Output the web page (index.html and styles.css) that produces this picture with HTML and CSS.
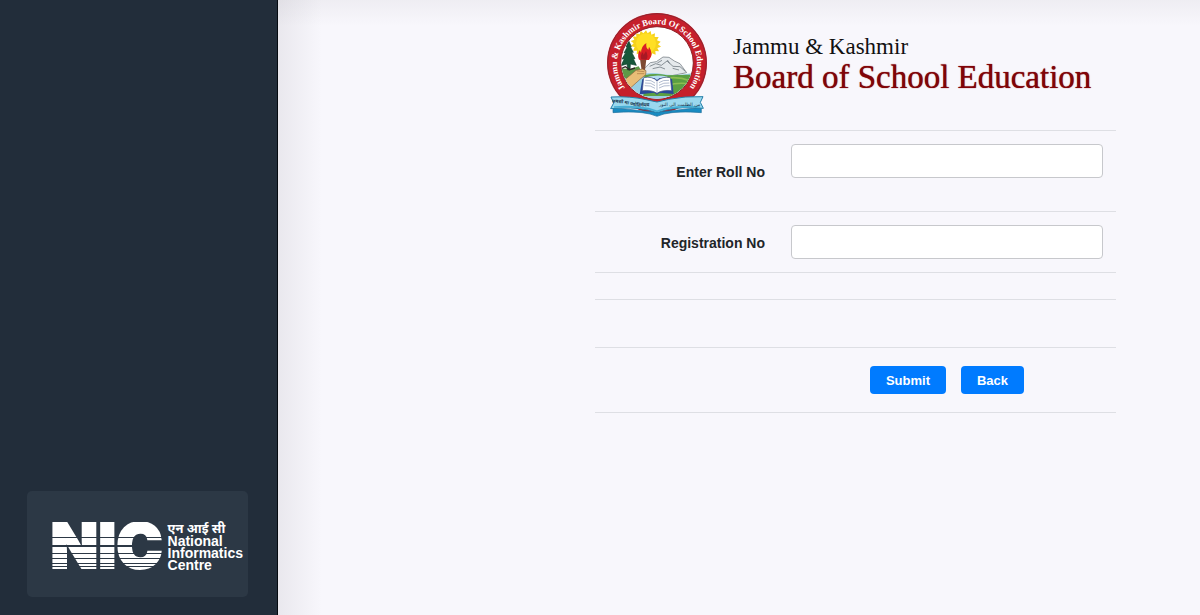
FILE: index.html
```html
<!DOCTYPE html>
<html lang="en">
<head>
    <meta charset="UTF-8">
    <meta name="viewport" content="width=device-width, initial-scale=1">
    <title>Jammu &amp; Kashmir Board of School Education</title>
    <link rel="stylesheet" href="styles.css">
</head>
<body>
    <aside class="sidebar">
        <div class="nic-card">
            <span class="nic-mark">NIC</span>
            <div class="nic-name">
                <span class="nic-hindi" lang="hi">एन आई सी</span>
                <span>National<br>Informatics<br>Centre</span>
            </div>
        </div>
    </aside>

    <main class="content">
        <form class="result-form">
            <header class="board-header">
                <svg class="seal" viewBox="30 18 312 324" aria-hidden="true">
                    <defs>
                        <clipPath id="scene"><circle cx="186" cy="174" r="107"/></clipPath>
                        <path id="ring-text" d="M90 249 A120 120 0 1 1 282 249"/>
                        <path id="ribbon-left" d="M52 293 Q80 293 110 301 T188 300"/>
                    </defs>
                    <circle cx="186" cy="174" r="150" fill="#c51f2b"/>
                    <circle cx="186" cy="174" r="148" fill="none" stroke="#8e2630" stroke-width="3"/>
                    <circle cx="186" cy="174" r="109" fill="#fff" stroke="#8d2027" stroke-width="3"/>
                    <g clip-path="url(#scene)">
                        <!-- sun -->
                        <path d="M153 76l5 9 9-7 2 11 11-4-1 11 12 0-5 10 11 4-8 8 9 7-11 4 5 10-11-1 1 11-11-4-3 11-8-8-7 9-6-9-9 7-2-11-11 4 1-11-12 0 5-10-11-4 8-8-9-7 11-4-5-10 11 1-1-11 11 4 3-11 8 8z" fill="#f6d21c"/>
                        <circle cx="153" cy="115" r="30" fill="#ffdf24"/>
                        <!-- hills -->
                        <path d="M144 194l22-21 18-3 20-14 18 1 16 11 17 8 20 27-50 10-80-3z" fill="#e5e9ec" stroke="#626b73" stroke-width="2"/>
                        <path d="M164 184l18-8 17 5 17-13 18 16 21 1 16 14M187 174l14-8M217 165l7 10M173 191l22-5 15 6M233 190l19 5" fill="none" stroke="#59646b" stroke-width="2"/>
                        <path d="M125 211q38-11 76-4t95-3v80H70v-69z" fill="#98cfe3"/>
                        <path d="M148 211q32-8 68 0l72-2-8 64H145z" fill="#5b9f42"/>
                        <path d="M145 219q36-13 74-4-25 3-34 12z" fill="#b5dcf0"/>
                        <path d="M218 219q36-4 66 8M216 241q35-10 70-4" fill="none" stroke="#8dbd51" stroke-width="5"/>
                        <!-- pine -->
                        <path d="M74 190l32 2 25-8 9 15-31 20H77z" fill="#5e9847"/>
                        <path d="M101 107l-8 19 4-1-10 19 6-2-12 20 7-1-10 21 18-5 2 18h7l1-18 18 4-9-20 5 0-10-19 5 0-9-17 3 0z" fill="#17583a" stroke="#0f3f2c" stroke-width="2"/>
                        <path d="M76 192l15-7 13 9 16-5" fill="none" stroke="#312c28" stroke-width="4"/>
                        <!-- torch and hand -->
                        <path d="M135 162l19 1-5 41-8-1z" fill="#7d4a32"/>
                        <path d="M85 228l38-32 20-4 10 5-1 12-17 14-31 28z" fill="#e9bd76" stroke="#8d633d" stroke-width="2"/>
                        <path d="M126 198l22 2M126 206l22 0" stroke="#a87542" stroke-width="2"/>
                        <path d="M132 164q-7-17 3-29l3 8q1-20 16-29-2 15 6 20l2-9q15 22 0 40z" fill="#d91e25"/>
                        <path d="M139 163q-4-12 4-21l3 8 7-12q8 15 1 26z" fill="#a81924"/>
                    </g>
                    <path d="M142 222l36-3 8 6 8-6 37 3 5 45-43-4-7 6-8-6-44 5z" fill="#29479a"/>
                    <path d="M146 218q26-5 40 10 16-15 40-10l4 39q-30-3-44 8-16-11-44-8z" fill="#fff" stroke="#3e4e80" stroke-width="2"/>
                    <path d="M186 229v36M151 226q19-2 29 8M150 234q19-2 30 8M149 242q18-2 31 8M192 233q12-9 30-7M192 241q13-9 31-7M192 249q14-9 32-7" fill="none" stroke="#8b9ab6" stroke-width="2"/>
                    <text class="seal-text"><textPath href="#ring-text">Jammu &amp; Kashmir Board Of School Education</textPath></text>
                    <!-- ribbon -->
                    <path d="M54 308v15q66-6 111 4l21 7 21-7q45-10 112-4v-16l-133 15z" fill="#188bc2" stroke="#226f9b" stroke-width="2"/>
                    <path d="M48 276q58-3 105 8l33 7 35-8q48-10 103-8l-8 17 9 18q-67-6-113 5l-26 8-26-8q-49-10-113-4l9-17z" fill="#9ad8ee" stroke="#237ea8" stroke-width="3"/>
                    <path d="M57 306q57-4 104 5l25 8 25-8q48-9 104-5" fill="none" stroke="#47afd5" stroke-width="5"/>
                    <text class="ribbon-text" lang="hi"><textPath href="#ribbon-left">तमसो मा ज्योतिर्गमय</textPath></text>
                    <text class="ribbon-text ribbon-urdu" lang="ur" x="254" y="302" text-anchor="middle">من الظلمت الی النور</text>
                </svg>
                <h1 class="board-title">
                    <span class="board-state">Jammu &amp; Kashmir</span>
                    <span class="board-name">Board of School Education</span>
                </h1>
            </header>

            <div class="form-row roll-row">
                <label for="roll-no">Enter Roll No</label>
                <div class="field"><input type="text" id="roll-no" name="rollno"></div>
            </div>
            <div class="form-row">
                <label for="reg-no">Registration No</label>
                <div class="field"><input type="text" id="reg-no" name="regno"></div>
            </div>
            <div class="form-row spacer-row"></div>
            <div class="form-row message-row"></div>
            <div class="form-row button-row">
                <div class="buttons">
                    <button type="submit">Submit</button>
                    <button type="button">Back</button>
                </div>
            </div>
        </form>
    </main>
</body>
</html>
```
FILE: styles.css
```css
* {
    box-sizing: border-box;
}
body {
    display: flex;
    min-height: 100vh;
    margin: 0;
    font-family: "Liberation Sans", Arial, sans-serif;
    font-size: 14px;
    color: #212529;
    background-color: #f8f7fc;
}
.sidebar {
    display: flex;
    flex-direction: column;
    justify-content: flex-end;
    flex: 0 0 278px;
    padding: 18px 29px 18px 27px;
    background-color: #222d3a;
    border-right: 1px solid #050a10;
}
.nic-card {
    display: flex;
    align-items: center;
    justify-content: flex-end;
    gap: 5px;
    height: 106px;
    padding: 4px 5px 0 0;
    background-color: #2c3845;
    border-radius: 5px;
    color: #fff;
}
.nic-mark {
    font-family: Inter, sans-serif;
    font-size: 62px;
    font-weight: 900;
    line-height: 48px;
    color: transparent;
    -webkit-text-stroke: 2px transparent;
    background-image: linear-gradient(
        #fff 15px, transparent 15px, transparent 16px,
        #fff 16px, #fff 23px, transparent 23px, transparent 25px,
        #fff 25px, #fff 31px, transparent 31px, transparent 32px,
        #fff 32px, #fff 36px, transparent 36px, transparent 37px,
        #fff 37px, #fff 41px, transparent 41px, transparent 42px,
        #fff 42px, #fff 44px, transparent 44px, transparent 45px,
        #fff 45px);
    -webkit-background-clip: text;
    background-clip: text;
}
.nic-name {
    display: flex;
    flex-direction: column;
    font-size: 14px;
    font-weight: bold;
    line-height: 12px;
}
.nic-hindi {
    font-family: "Noto Sans", sans-serif;
    font-size: 13px;
    font-weight: bold;
    line-height: 14px;
    white-space: nowrap;
}
.content {
    flex: 1;
    padding-right: 84px;
    background-image:
        linear-gradient(to right, rgba(60, 55, 70, 0.08), transparent 44px),
        linear-gradient(to bottom, rgba(60, 55, 70, 0.05), transparent 26px);
}
.result-form {
    max-width: 521px;
    margin-left: auto;
    border-bottom: 1px solid #dedfe4;
}
.board-header {
    display: flex;
    align-items: center;
    gap: 24px;
    height: 130px;
    padding-left: 10px;
}
.seal {
    flex: none;
    width: 104px;
    height: 108px;
}
.seal-text {
    font-family: "Liberation Serif", serif;
    font-size: 26px;
    font-weight: bold;
    fill: #fff;
}
.ribbon-text {
    font-family: "Noto Sans", sans-serif;
    font-size: 14px;
    font-weight: bold;
    fill: #16324c;
}
.ribbon-urdu {
    font-family: "DejaVu Sans", sans-serif;
    font-weight: normal;
}
.board-title {
    display: flex;
    flex-direction: column;
    margin: 0;
    font-family: "Liberation Serif", serif;
    font-weight: normal;
    white-space: nowrap;
}
.board-state {
    font-size: 23px;
    line-height: 24px;
    color: #111;
}
.board-name {
    font-size: 33px;
    line-height: 36px;
    color: #800408;
    text-shadow: 0 0 1px #800408;
}
.form-row {
    display: grid;
    grid-template-columns: 183px 1fr;
    align-items: center;
    border-top: 1px solid #dedfe4;
}
.form-row label {
    padding: 2px 13px 0 0;
    font-weight: bold;
    text-align: right;
}
.field {
    padding: 13px;
}
.roll-row .field {
    padding-bottom: 33px;
}
.field input {
    display: block;
    width: 100%;
    height: 34px;
    padding: 6px 12px;
    font: inherit;
    background-color: #fff;
    border: 1px solid #c7c8cc;
    border-radius: 4px;
}
.spacer-row {
    height: 27px;
}
.message-row {
    height: 48px;
}
.buttons {
    grid-column: 2;
    display: flex;
    justify-content: center;
    gap: 15px;
    padding: 18px 0;
}
.buttons button {
    height: 28px;
    padding: 0 16px;
    font-family: inherit;
    font-size: 13px;
    font-weight: bold;
    color: #fff;
    background-color: #007bff;
    border: none;
    border-radius: 4px;
    cursor: pointer;
}
.buttons button:hover {
    background-color: #0069d9;
}
```
